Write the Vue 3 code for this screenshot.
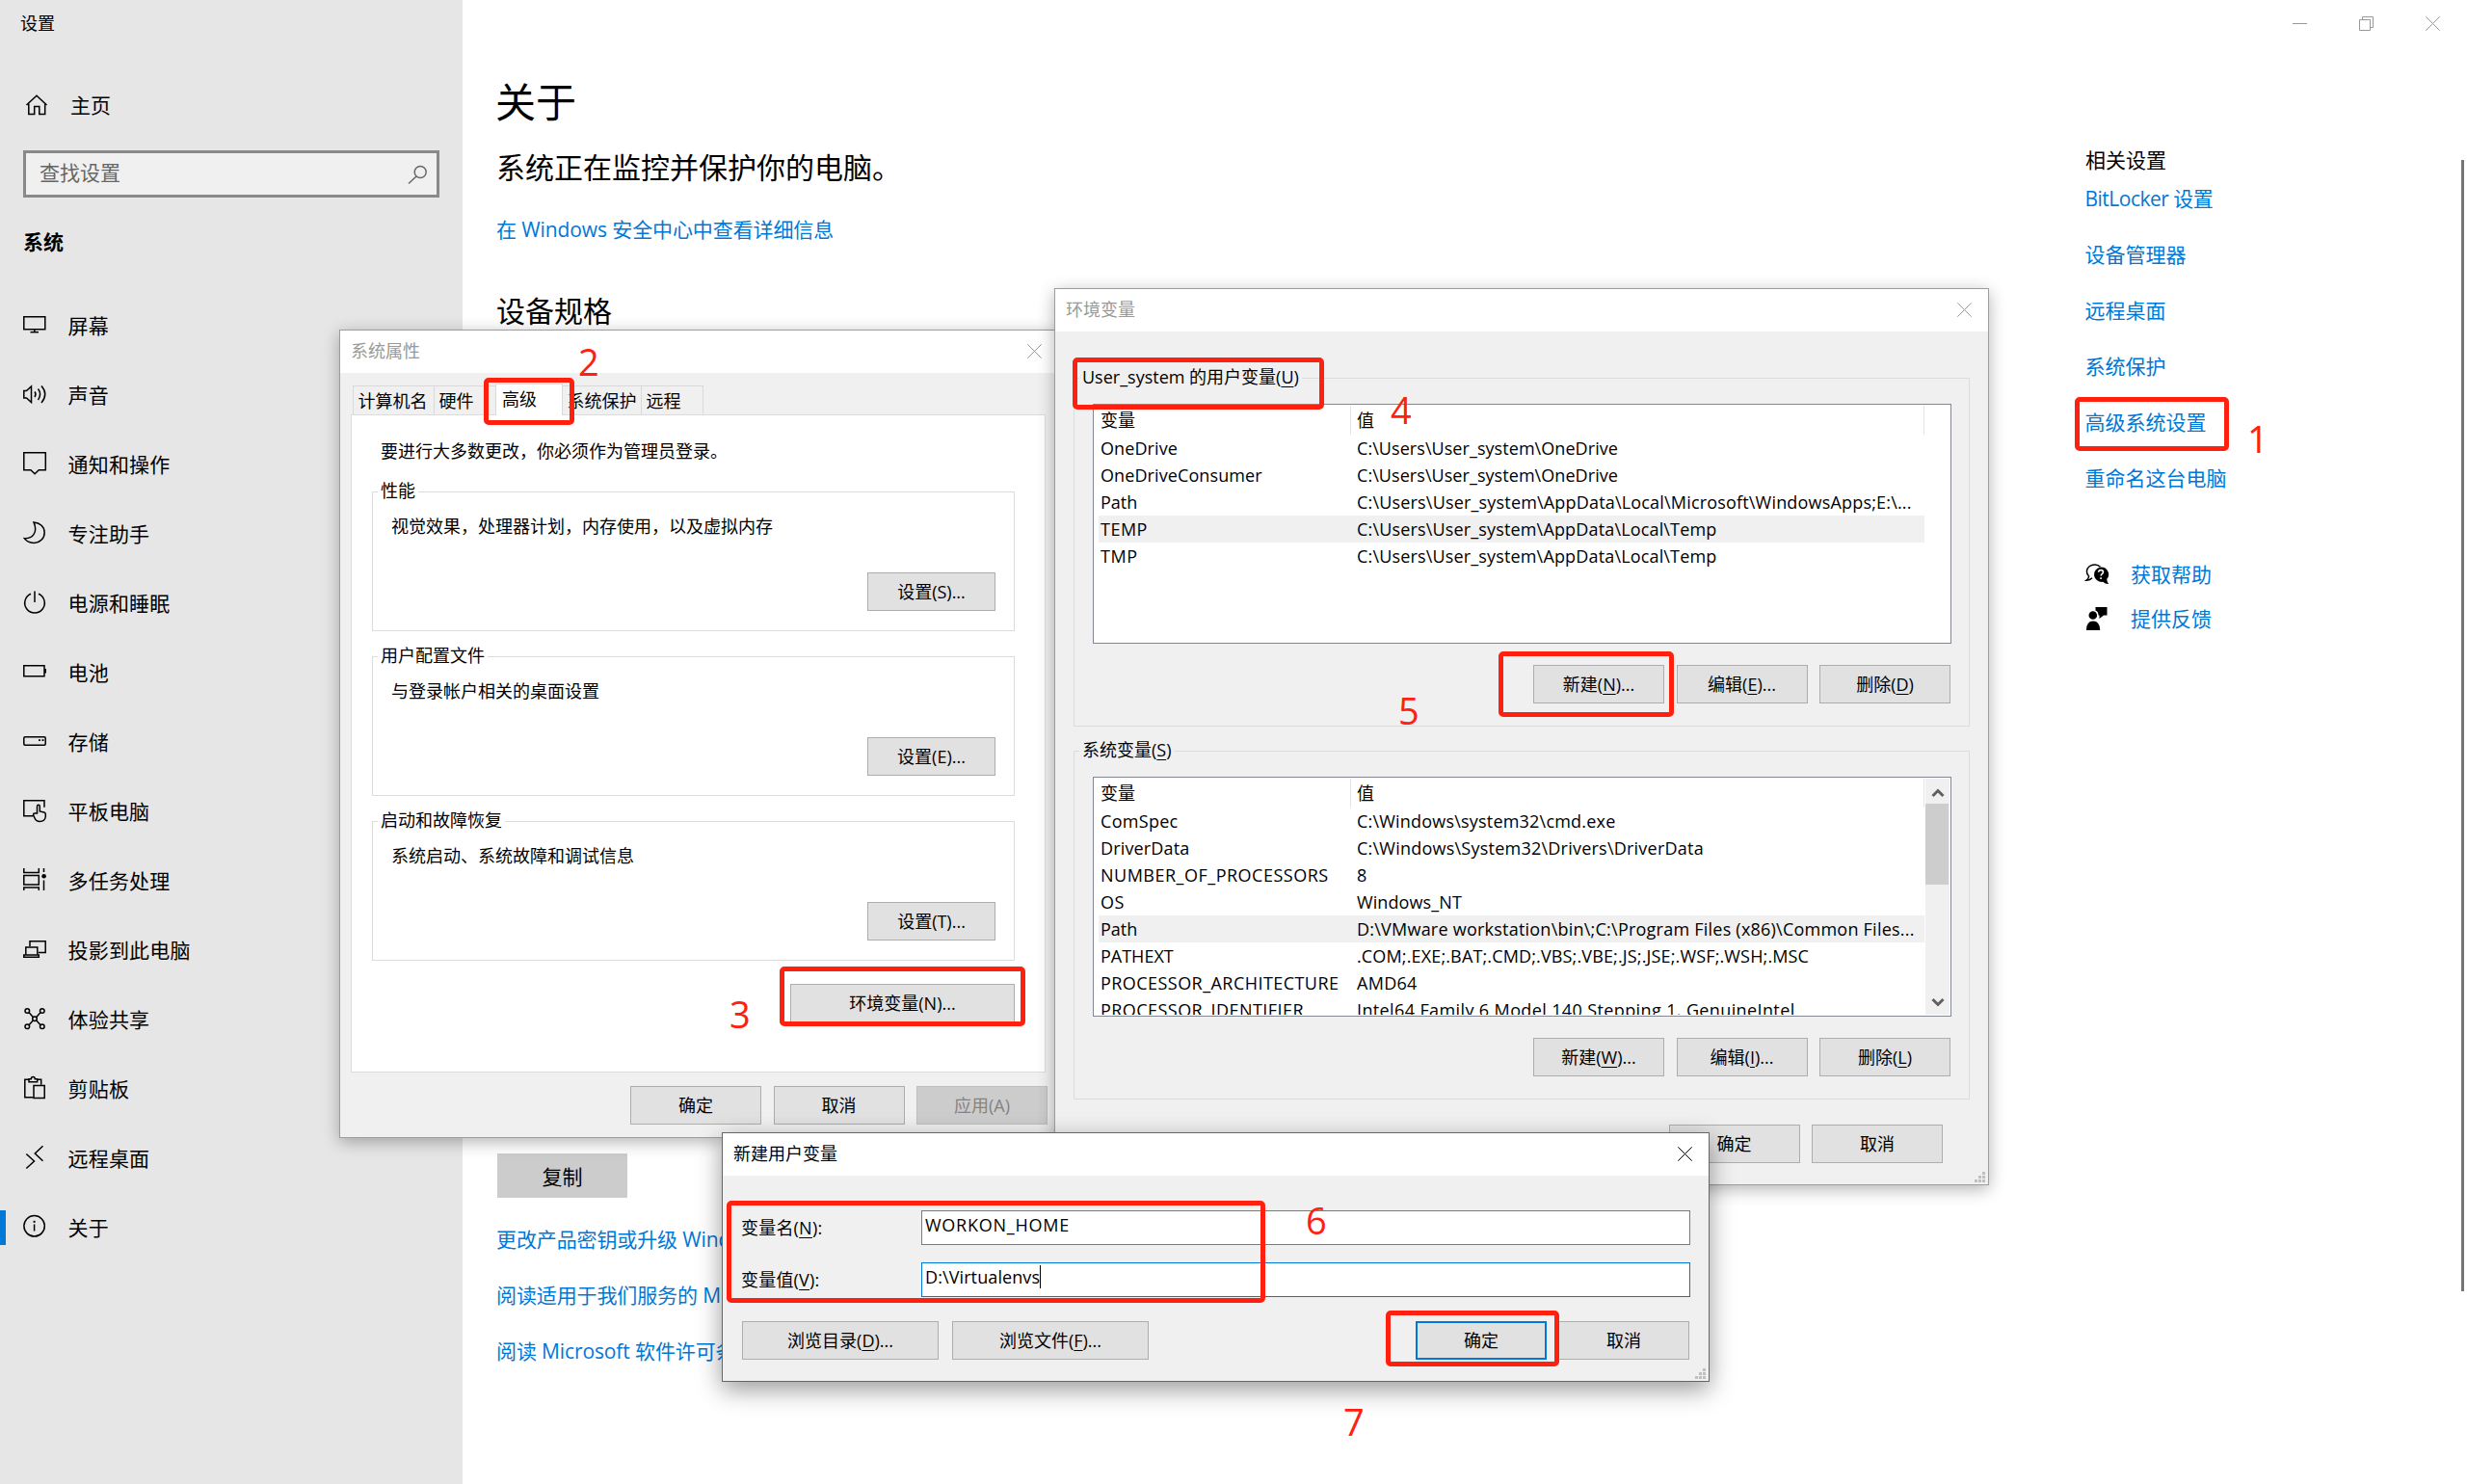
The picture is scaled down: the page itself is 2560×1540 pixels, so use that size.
<script setup>
import { ref } from "vue";

// --- SIDEBAR ---
const navItems = ref([
  { text: "屏幕", lines: ["M.8 4.8h22v13h-22z", "M11.8 18v2.6", "M7.5 20.7h8.5"] },
  {
    text: "声音",
    lines: [
      "M.8 9.5h2.7l5-4.5v16.500l-5-4.500h-2.700z",
      "M12 10.500q2 2.500 0 5.500",
      "M15.500 7.500q4.200 5.500 0 11.500",
      "M19 4.500q7.500 8.500 0 17.500",
    ],
  },
  { text: "通知和操作", lines: ["M.8 1.800h22.500v18h-7l-4.200 4-4.200-4h-7.100z"] },
  { text: "专注助手", lines: ["M11 1.900c6.500.5 11.200 5 11.200 10.800 0 6-5 10.700-11 10.700-4 0-8-1.900-9.900-4.700 8 .6 14.500-5.700 9.700-16.800z"] },
  { text: "电源和睡眠", lines: ["M12 1.500v11.500", "M8 4.300a10.300 10.300 0 1 0 8 0"] },
  { text: "电池", lines: ["M.8 6.800h21.200v11h-21.200z"], solid: "M22 10h2v4.500h-2z" },
  { text: "存储", lines: ["M2 8.800h20q1.200 0 1.200 1.200v6q0 1.200-1.200 1.200h-20q-1.200 0-1.200-1.200v-6q0-1.200 1.200-1.200z"], solid: "M16 11.200h2v1.800h-2zM19.500 11.200h2v1.800h-2z" },
  {
    text: "平板电脑",
    lines: [
      "M10.500 18.800h-9.700v-16h21.200v7",
      "M14.500 16v-7q0-1.700 1.400-1.700t1.400 1.700v5l4.500 1q1.500.5 1.500 2v2.500q-.8 5-6 5-3.800 0-5.300-3.500l-1.500-3.500q0-1.500 1.500-1.500z",
    ],
  },
  {
    text: "多任务处理",
    lines: ["M.8 1v4.500h15.500v-4.500", "M.8 8.500h15.500v9.500h-15.500z", "M.8 24v-3h15.500v3", "M21.500 1v4", "M21.500 13.500v10.500"],
    solid: "M19.300 9.300a2.300 2.300 0 1 0 4.600 0a2.300 2.300 0 1 0-4.600 0z",
  },
  { text: "投影到此电脑", lines: ["M7 10v-5.200h16.200v11.700h-7.500", "M2.800 18.800v-7.800h12v7.800", "M.8 19h15.500v2.200h-15.500z"] },
  {
    text: "体验共享",
    lines: [
      "M2 5a2.300 2.300 0 1 0 4.600 0a2.300 2.300 0 1 0-4.600 0z",
      "M17.500 5a2.300 2.300 0 1 0 4.600 0a2.300 2.300 0 1 0-4.600 0z",
      "M2 21.300a2.300 2.300 0 1 0 4.600 0a2.300 2.300 0 1 0-4.600 0z",
      "M17.500 21.300a2.300 2.300 0 1 0 4.600 0a2.300 2.300 0 1 0-4.600 0z",
      "M9.700 13.200a2.300 2.300 0 1 0 4.600 0a2.300 2.300 0 1 0-4.600 0z",
      "M6 6.600l4.300 4.800M18.100 6.600l-4.300 4.800M6 19.700l4.300-4.800M18.100 19.700l-4.300-4.800",
    ],
  },
  {
    text: "剪贴板",
    lines: ["M10.500 22.800h-8.700v-18.500h4.200M14.500 4.300h4.200v5.500", "M6 6.800v-3h2.300q0-2.200 2-2.200t2 2.200h2.400v3z", "M11 10.500h11.200v12.900h-11.200z"],
  },
  { text: "远程桌面", lines: ["M3.300 9.500l8.200 7.500-8.200 7.500", "M20.500 1.200l-8.200 7.800 8.200 7.800"] },
  { text: "关于", lines: ["M.9 12.300a10.700 10.700 0 1 0 21.400 0a10.700 10.700 0 1 0-21.400 0z", "M11.600 10.500v7"], solid: "M10.600 6.800h2v2h-2z", active: true },
]);

// --- RELATED LINKS ---
const relatedLinks = ref(["BitLocker 设置", "设备管理器", "远程桌面", "系统保护", "高级系统设置", "重命名这台电脑"]);
const bottomLinks = ref(["更改产品密钥或升级 Windows", "阅读适用于我们服务的 Microsoft 服务协议", "阅读 Microsoft 软件许可条款"]);

// --- SYSTEM PROPERTIES ---
const tabs = ref([
  { text: "计算机名", width: 85 },
  { text: "硬件", width: 65 },
  { text: "高级", width: 70, selected: true },
  { text: "系统保护", width: 83 },
  { text: "远程", width: 65 },
]);
const sections = ref([
  { title: "性能", desc: "视觉效果，处理器计划，内存使用，以及虚拟内存", button: "设置(S)..." },
  { title: "用户配置文件", desc: "与登录帐户相关的桌面设置", button: "设置(E)..." },
  { title: "启动和故障恢复", desc: "系统启动、系统故障和调试信息", button: "设置(T)..." },
]);

// --- ENVIRONMENT VARIABLES ---
// each row: name, value, letter spacing of the name, letter spacing of the value
const groups = ref([
  {
    title: "User_system 的用户变量",
    key: "U",
    rows: [
      ["OneDrive", "C:\\Users\\User_system\\OneDrive", 0.1, 0.06],
      ["OneDriveConsumer", "C:\\Users\\User_system\\OneDrive", 0.1, 0.06],
      ["Path", "C:\\Users\\User_system\\AppData\\Local\\Microsoft\\WindowsApps;E:\\...", 0, 0.18],
      ["TEMP", "C:\\Users\\User_system\\AppData\\Local\\Temp", 0.5, 0.16],
      ["TMP", "C:\\Users\\User_system\\AppData\\Local\\Temp", 0.6, 0.16],
    ],
    selected: 3,
    scroll: false,
    buttons: [["新建", "N", "..."], ["编辑", "E", "..."], ["删除", "D", ""]],
  },
  {
    title: "系统变量",
    key: "S",
    rows: [
      ["ComSpec", "C:\\Windows\\system32\\cmd.exe", 0.3, 0.2],
      ["DriverData", "C:\\Windows\\System32\\Drivers\\DriverData", 0.15, 0.23],
      ["NUMBER_OF_PROCESSORS", "8", 0.5, 0],
      ["OS", "Windows_NT", 0.4, 0.1],
      ["Path", "D:\\VMware workstation\\bin\\;C:\\Program Files (x86)\\Common Files...", 0, 0.23],
      ["PATHEXT", ".COM;.EXE;.BAT;.CMD;.VBS;.VBE;.JS;.JSE;.WSF;.WSH;.MSC", 0, 0.14],
      ["PROCESSOR_ARCHITECTURE", "AMD64", 0.45, 0.3],
      ["PROCESSOR_IDENTIFIER", "Intel64 Family 6 Model 140 Stepping 1, GenuineIntel", 0.45, 0.38],
    ],
    selected: 4,
    scroll: true,
    buttons: [["新建", "W", "..."], ["编辑", "I", "..."], ["删除", "L", ""]],
  },
]);

// --- NEW VARIABLE ---
const varName = ref("WORKON_HOME");
const varValue = ref("D:\\Virtualenvs");

// --- STEP MARKS: box [x, y, w, h] and the number beside it [x, y] ---
const marks = ref([
  { n: 1, box: [2153, 412, 160, 56], at: [2332, 455] },
  { n: 2, box: [502, 392, 94, 49], at: [600, 375] },
  { n: 3, box: [809, 1003, 255, 62], at: [757, 1052] },
  { n: 4, box: [1113, 371, 261, 54], at: [1443, 425] },
  { n: 5, box: [1555, 676, 182, 68], at: [1451, 737] },
  { n: 6, box: [754, 1246, 559, 106], at: [1355, 1266] },
  { n: 7, box: [1438, 1360, 180, 58], at: [1394, 1475] },
]);

function boxStyle([x, y, w, h]) {
  return { left: x + "px", top: y + "px", width: w + "px", height: h + "px" };
}
function numStyle([x, y]) {
  return { left: x + "px", top: y - 24 + "px" };
}
</script>

<template>
  <div class="screen">
    <!-- sidebar -->
    <aside class="sidebar">
      <div class="app-title">设置</div>
      <div class="home">
        <svg class="icon" viewBox="0 0 24 24">
          <path d="M1.500 12L12 2.200 22.500 12" />
          <path d="M3.800 10.500v11h5.900v-8h5.100v8h5.900v-11" />
        </svg>
        <span>主页</span>
      </div>
      <div class="search">
        <span>查找设置</span>
        <svg class="icon search-icon" viewBox="0 0 24 24">
          <path d="M9.200 9.500a6 6 0 1 0 12 0a6 6 0 1 0-12 0z" />
          <path d="M11 14l-8 7.500" />
        </svg>
      </div>
      <div class="category">系统</div>
      <nav>
        <div v-for="item in navItems" :key="item.text" class="nav-item" :class="{ active: item.active }">
          <svg class="icon" viewBox="0 0 24 24">
            <path v-for="d in item.lines" :key="d" :d="d" />
            <path v-if="item.solid" class="solid" :d="item.solid" />
          </svg>
          <span>{{ item.text }}</span>
        </div>
      </nav>
    </aside>

    <!-- page -->
    <main class="content">
      <h1>关于</h1>
      <h2>系统正在监控并保护你的电脑。</h2>
      <a class="link security">在 Windows 安全中心中查看详细信息</a>
      <h2 class="specs">设备规格</h2>
      <button class="copy">复制</button>
      <a v-for="l in bottomLinks" :key="l" class="link bottom-link">{{ l }}</a>
    </main>

    <section class="related">
      <div class="related-title">相关设置</div>
      <a v-for="l in relatedLinks" :key="l" class="link related-link">{{ l }}</a>
      <div class="help first">
        <svg class="icon" viewBox="0 0 24 24">
          <path d="M3.500 13.800a7.600 6.700 0 1 1 12-9.500" />
          <path d="M3.800 13.500q-.3 3-2.600 4.700 3.800-.2 5.800-2.500" />
          <path class="solid" d="M16 4.500a8 7.600 0 0 1 6.200 12.600q.2 2.500 2 5-3.500.2-6-2.300a8 7.600 0 1 1-2.200-15.300z" />
          <path class="question" d="M13.600 9.800q.2-2.200 2.500-2.200t2.400 2q0 1.200-1.200 2t-1.200 2M16.100 15.300v1.700" />
        </svg>
        <a class="link">获取帮助</a>
      </div>
      <div class="help">
        <svg class="icon" viewBox="0 0 24 24">
          <path class="solid" d="M3.500 8.500a4.300 4.300 0 1 0 8.600 0a4.300 4.300 0 1 0-8.600 0zM1 24q0-9.500 7-9.500t7.200 9.500zM10.500 0h12v8.500h-3.500l-4.500 3.500v-3.500h-1q0-4-3-5z" />
        </svg>
        <a class="link">提供反馈</a>
      </div>
    </section>

    <div class="win-controls">
      <svg viewBox="0 0 15 15"><path d="M0 7.500h15" /></svg>
      <svg viewBox="0 0 15 15"><path d="M.5 3.500h11v11h-11zM3.500 3.500v-3h11v11h-3" /></svg>
      <svg viewBox="0 0 15 15"><path d="M.3.3l14.400 14.400M14.700.3l-14.400 14.400" /></svg>
    </div>
    <div class="page-scroll"></div>

    <!-- system properties -->
    <div class="window props">
      <header class="titlebar">
        <span>系统属性</span>
        <svg viewBox="0 0 15 15"><path d="M.3.3l14.400 14.400M14.700.3l-14.400 14.400" /></svg>
      </header>
      <div class="tabs">
        <div v-for="t in tabs" :key="t.text" class="tab" :class="{ selected: t.selected }" :style="{ width: t.width + 'px' }">
          {{ t.text }}
        </div>
      </div>
      <div class="panel">
        <p class="note">要进行大多数更改，你必须作为管理员登录。</p>
        <fieldset v-for="s in sections" :key="s.title">
          <legend>{{ s.title }}</legend>
          <p class="desc">{{ s.desc }}</p>
          <button class="btn">{{ s.button }}</button>
        </fieldset>
        <button class="btn env-btn">环境变量(N)...</button>
      </div>
      <div class="buttons">
        <button class="btn">确定</button>
        <button class="btn">取消</button>
        <button class="btn disabled">应用(A)</button>
      </div>
    </div>

    <!-- environment variables -->
    <div class="window env">
      <header class="titlebar">
        <span>环境变量</span>
        <svg viewBox="0 0 15 15"><path d="M.3.3l14.400 14.400M14.700.3l-14.400 14.400" /></svg>
      </header>
      <fieldset v-for="g in groups" :key="g.key">
        <legend>{{ g.title }}(<u>{{ g.key }}</u>)</legend>
        <div class="list">
          <div class="table">
            <div class="row head"><span class="name">变量</span><span class="value">值</span></div>
            <div v-for="(r, i) in g.rows" :key="r[0]" class="row" :class="{ picked: i === g.selected }">
              <span class="name" :style="{ letterSpacing: r[2] + 'px' }">{{ r[0] }}</span>
              <span class="value" :style="{ letterSpacing: r[3] + 'px' }">{{ r[1] }}</span>
            </div>
          </div>
          <div v-if="g.scroll" class="scrollbar">
            <svg viewBox="0 0 25 26"><path d="M7.500 18l5.500-5.500 5.500 5.500" /></svg>
            <div class="thumb"></div>
            <svg class="down" viewBox="0 0 25 26"><path d="M7.500 10l5.500 5.500 5.500-5.500" /></svg>
          </div>
        </div>
        <div class="buttons">
          <button v-for="b in g.buttons" :key="b[1]" class="btn">{{ b[0] }}(<u>{{ b[1] }}</u>){{ b[2] }}</button>
        </div>
      </fieldset>
      <div class="buttons confirm">
        <button class="btn">确定</button>
        <button class="btn">取消</button>
      </div>
      <svg class="grip" viewBox="0 0 11 11"><path d="M8 0h3v3h-3zM4 4h3v3h-3zM8 4h3v3h-3zM0 8h3v3h-3zM4 8h3v3h-3zM8 8h3v3h-3z" /></svg>
    </div>

    <!-- new user variable -->
    <div class="window newvar">
      <header class="titlebar">
        <span>新建用户变量</span>
        <svg viewBox="0 0 15 15"><path d="M.3.3l14.400 14.400M14.700.3l-14.400 14.400" /></svg>
      </header>
      <div class="form">
        <label>变量名(<u>N</u>):</label>
        <div class="field caps">{{ varName }}</div>
        <label>变量值(<u>V</u>):</label>
        <div class="field focused">{{ varValue }}<i class="caret"></i></div>
      </div>
      <div class="buttons">
        <button class="btn wide">浏览目录(<u>D</u>)...</button>
        <button class="btn wide">浏览文件(<u>F</u>)...</button>
        <button class="btn default">确定</button>
        <button class="btn">取消</button>
      </div>
      <svg class="grip" viewBox="0 0 11 11"><path d="M8 0h3v3h-3zM4 4h3v3h-3zM8 4h3v3h-3zM0 8h3v3h-3zM4 8h3v3h-3zM8 8h3v3h-3z" /></svg>
    </div>

    <!-- step marks -->
    <template v-for="m in marks" :key="m.n">
      <div class="mark-box" :style="boxStyle(m.box)"></div>
      <div class="mark-num" :style="numStyle(m.at)">{{ m.n }}</div>
    </template>
  </div>
</template>

<style>
body {
  margin: 0;
  background: #fff;
}
</style>

<style scoped>
.screen {
  position: relative;
  display: flex;
  width: 2560px;
  height: 1540px;
  overflow: hidden;
  background: #fff;
  color: #000;
  font-family: "Open Sans", "Noto Sans CJK SC", sans-serif;
  font-size: 21px;
  line-height: 30px;
  white-space: nowrap;
}
h1, h2, p {
  margin: 0;
  font-weight: 400;
}
button {
  font-family: inherit;
  color: inherit;
  padding: 0;
}
svg {
  display: block;
  fill: none;
}
.icon {
  width: 24px;
  height: 24px;
  flex: none;
  stroke: #000;
  stroke-width: 1.5;
  overflow: visible;
}
.solid {
  fill: #000;
  stroke: none;
}
.question {
  stroke: #fff;
  stroke-width: 1.6;
}
.link {
  color: #0078d7;
}

/* sidebar */
.sidebar {
  box-sizing: border-box;
  width: 480px;
  height: 1540px;
  flex: none;
  background: #e6e6e6;
}
.app-title {
  padding: 9px 0 1px 21px;
  font-size: 18px;
}
.home {
  display: flex;
  align-items: center;
  gap: 23px;
  padding: 54px 0 0 26px;
}
.search {
  box-sizing: border-box;
  display: flex;
  justify-content: space-between;
  align-items: center;
  width: 432px;
  height: 49px;
  margin: 32px 0 0 24px;
  padding: 0 8px 0 14px;
  border: 3px solid #898989;
  background: #f0f0f0;
  color: #666;
}
.search span {
  margin-bottom: 3px;
}
.search-icon {
  stroke: #666;
}
.category {
  margin: 31px 0 0 24px;
  font-weight: 700;
}
nav {
  margin-top: 36px;
}
.nav-item {
  display: flex;
  align-items: center;
  gap: 22.5px;
  height: 72px;
  padding-left: 24px;
  letter-spacing: 0.2px;
}
.nav-item .icon {
  margin-bottom: 4px;
}
.nav-item.active {
  padding-left: 18px;
}
.nav-item.active::before {
  content: "";
  width: 6px;
  height: 36px;
  margin-left: -18px;
  margin-right: -4.5px;
  background: #0078d7;
}
.nav-item span {
  margin-bottom: 1px;
}

/* page */
.content {
  display: flex;
  flex-direction: column;
  align-items: flex-start;
  width: 1648px;
  padding-left: 36px;
}
h1 {
  margin: 76px 0 0 -2px;
  font-size: 42px;
  line-height: 60px;
}
h2 {
  margin: 18px 0 0 -1px;
  font-size: 30px;
  line-height: 40px;
}
.security {
  margin: 29px 0 0 -1px;
  letter-spacing: -0.1px;
}
.specs {
  margin-top: 50px;
}
.copy {
  width: 135px;
  height: 46px;
  margin: 854px 0 28px;
  border: 0;
  background: #ccc;
  font-size: 21px;
}
.bottom-link {
  margin: 0 0 28px -1px;
  letter-spacing: -0.12px;
}
.related {
  display: flex;
  flex-direction: column;
  padding-top: 151px;
}
.related-title {
  margin-bottom: 10px;
}
.related-link {
  margin: 0 0 28px -0.5px;
}
.related-title + .related-link {
  letter-spacing: -0.5px;
}
.help {
  display: flex;
  align-items: center;
  gap: 23px;
  margin-top: 16px;
}
.help.first {
  margin-top: 42px;
}
.win-controls {
  position: absolute;
  top: 17px;
  right: 28px;
  display: flex;
  gap: 54px;
}
.win-controls svg,
.titlebar svg {
  width: 15px;
  height: 15px;
  stroke: #999;
  stroke-width: 1;
}
.page-scroll {
  position: absolute;
  right: 3px;
  top: 166px;
  width: 3px;
  height: 1174px;
  background: #767676;
}

/* windows */
.window {
  position: absolute;
  box-sizing: border-box;
  display: flex;
  flex-direction: column;
  border: 1px solid #9d9d9d;
  background: #f0f0f0;
  box-shadow: 0 4px 16px rgba(0, 0, 0, 0.3);
  font-size: 18px;
  line-height: 24px;
}
.titlebar {
  display: flex;
  justify-content: space-between;
  align-items: center;
  height: 44px;
  flex: none;
  padding: 0 17px 0 11px;
  background: #fff;
  color: #999;
}
.titlebar span {
  margin-bottom: 2px;
}
.titlebar svg {
  margin-bottom: 1px;
}
.btn {
  box-sizing: border-box;
  width: 136px;
  height: 40px;
  border: 1px solid #adadad;
  background: #e1e1e1;
  font-size: 18px;
  line-height: 24px;
}
.btn.disabled {
  border-color: #bfbfbf;
  background: #ccc;
  color: #838383;
}
.buttons {
  display: flex;
  justify-content: flex-end;
  gap: 12.5px;
}
u {
  text-underline-offset: 3px;
  text-decoration-thickness: 1px;
}
fieldset {
  box-sizing: border-box;
  min-width: 0;
  margin: 0;
  padding: 0;
  border: 1px solid #dcdcdc;
}
legend {
  height: 24px;
  margin-left: 5px;
  padding: 0 3px;
  line-height: 23px;
}

.props {
  left: 352px;
  top: 342px;
  width: 746px;
  height: 839px;
}
.props .titlebar {
  padding-right: 16px;
}
.tabs {
  display: flex;
  align-items: flex-end;
  height: 43px;
  padding-left: 13px;
}
.tab {
  box-sizing: border-box;
  height: 30px;
  margin-right: -1px;
  padding: 3px 0 0 4.5px;
  border: 1px solid #d9d9d9;
  border-bottom: 0;
  background: #f0f0f0;
}
.tab.selected {
  position: relative;
  height: 33px;
  margin-bottom: -1px;
  padding-left: 6px;
  background: #fff;
}
.panel {
  box-sizing: border-box;
  display: flex;
  flex-direction: column;
  width: 721px;
  height: 683px;
  margin: 0 0 14px 11px;
  padding: 25px 31px 0 21px;
  border: 1px solid #dcdcdc;
  background: #fff;
}
.note {
  padding-left: 9px;
}
.panel fieldset {
  display: block;
  height: 157px;
  margin-bottom: 14px;
}
.note + fieldset {
  margin-top: 18px;
}
.desc {
  margin: 12px 0 36px 19px;
}
.panel .btn {
  display: block;
  width: 133px;
  margin: 0 19px 0 auto;
}
.panel .env-btn {
  width: 233px;
  margin: 10px 0 0 auto;
}
.props > .buttons {
  padding-right: 10px;
}

.env {
  left: 1094px;
  top: 299px;
  width: 970px;
  height: 931px;
}
.env fieldset {
  height: 374px;
  margin: 0 19px 13px;
}
.env .titlebar {
  margin-bottom: 36px;
}
.list {
  box-sizing: border-box;
  display: flex;
  width: 891px;
  height: 249px;
  margin: 15px 0 22px 19px;
  padding-left: 5px;
  overflow: hidden;
  border: 1px solid #828790;
  background: #fff;
}
.table {
  width: 857px;
  height: 246px;
  overflow: hidden;
}
.row {
  display: flex;
  height: 28px;
  line-height: 28px;
}
.row.head {
  height: 30px;
  margin-top: 1px;
  line-height: 31px;
}
.head .name,
.head .value {
  border-right: 1px solid #e5e5e5;
}
.row.picked {
  background: #f0f0f0;
}
.name {
  box-sizing: border-box;
  width: 262px;
  padding-left: 2px;
}
.value {
  box-sizing: border-box;
  width: 595px;
  padding-left: 6px;
}
.scrollbar {
  display: flex;
  flex-direction: column;
  width: 25px;
  height: 245px;
  margin: 1px 0 0 1px;
  background: #f0f0f0;
}
.scrollbar svg {
  width: 25px;
  height: 26px;
  flex: none;
  stroke: #606060;
  stroke-width: 3;
}
.scrollbar .down {
  margin-top: auto;
}
.thumb {
  width: 24px;
  height: 84px;
  background: #cdcdcd;
}
fieldset .buttons {
  padding-right: 19px;
}
.confirm {
  padding: 13px 47px 0 0;
}
.grip {
  position: absolute;
  right: 3px;
  bottom: 2px;
  width: 11px;
  height: 11px;
  fill: #bfbfbf;
}

.newvar {
  left: 749px;
  top: 1175px;
  width: 1025px;
  height: 259px;
  border-color: #666;
  box-shadow: 0 8px 24px rgba(0, 0, 0, 0.4);
}
.newvar .titlebar {
  color: #000;
}
.newvar .titlebar svg {
  stroke: #000;
}
.form {
  display: grid;
  grid-template-columns: 187px 798px;
  grid-auto-rows: 36px;
  row-gap: 18px;
  padding: 36px 0 25px 19px;
}
.form label {
  padding-top: 6px;
  letter-spacing: 0.2px;
}
.field {
  box-sizing: border-box;
  display: flex;
  padding: 2px 0 0 3px;
  border: 1px solid #7a7a7a;
  background: #fff;
}
.field.caps {
  letter-spacing: 0.75px;
}
.field.focused {
  border-color: #0078d7;
  letter-spacing: 0.1px;
}
.caret {
  width: 1px;
  height: 24px;
  background: #000;
}
.newvar .buttons {
  justify-content: flex-start;
  gap: 12px;
  padding-left: 20px;
}
.wide {
  width: 204px;
  margin-right: 2px;
}
.default {
  margin-left: 263px;
  border: 2px solid #0078d7;
}

/* step marks */
.mark-box {
  position: absolute;
  box-sizing: border-box;
  border: 5px solid #ff2010;
  border-radius: 5px;
}
.mark-num {
  position: absolute;
  color: #ff2010;
  font-size: 38px;
  line-height: 48px;
}
</style>
